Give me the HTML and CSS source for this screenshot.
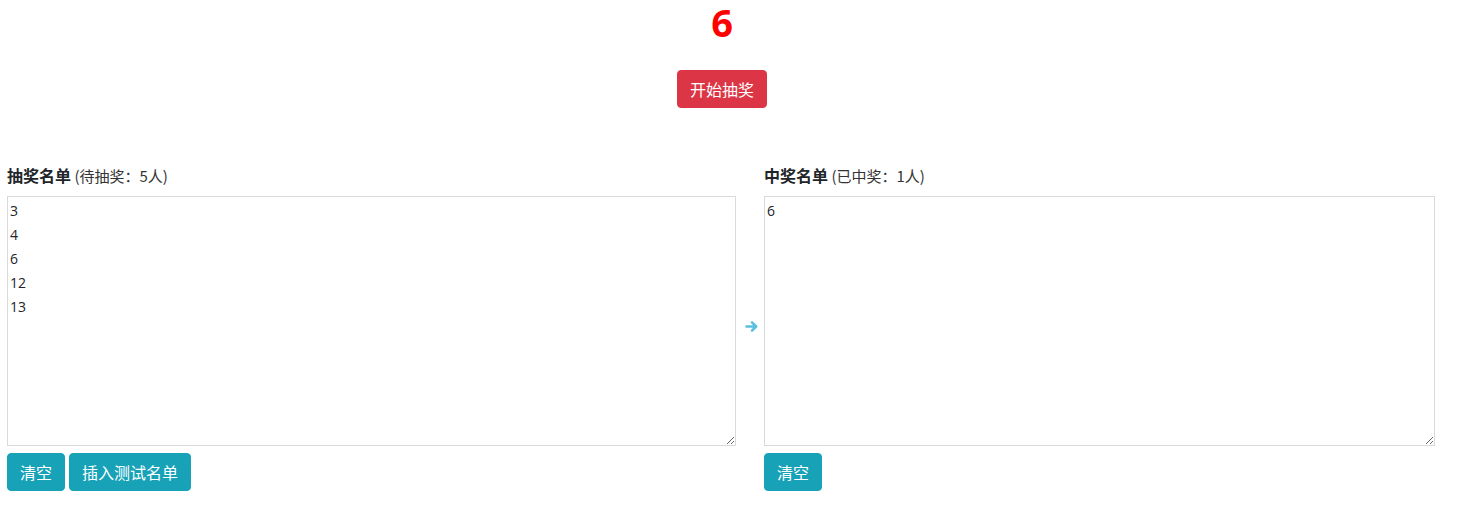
FILE: index.html
```html
<!DOCTYPE html>
<html lang="zh">
<head>
<meta charset="utf-8">
<title>抽奖</title>
<link rel="stylesheet" href="styles.css">
</head>
<body>
<div class="top">
  <div class="winner">6</div>
  <button class="btn btn-danger">开始抽奖</button>
</div>
<div class="lists">
  <div class="col col-left">
    <div class="label"><b>抽奖名单</b> (待抽奖：5人)</div>
    <textarea class="box">3
4
6
12
13</textarea>
    <div class="actions">
      <button class="btn btn-info">清空</button>
      <button class="btn btn-info">插入测试名单</button>
    </div>
  </div>
  <div class="arrow">
    <svg width="14" height="13" viewBox="0 0 14 13"><path d="M1.5 6.5h9.5M7 2.3l4.2 4.2L7 10.7" fill="none" stroke="#5bc0de" stroke-width="2.6" stroke-linecap="round" stroke-linejoin="round"/></svg>
  </div>
  <div class="col col-right">
    <div class="label"><b>中奖名单</b> (已中奖：1人)</div>
    <textarea class="box">6</textarea>
    <div class="actions">
      <button class="btn btn-info">清空</button>
    </div>
  </div>
</div>
</body>
</html>
```
FILE: styles.css
```css
html, body { margin: 0; padding: 0; background: #fff; }
body {
  font-family: "Open Sans", "Noto Sans CJK SC", sans-serif;
  color: #212529;
  font-size: 16px;
}
.top {
  display: flex;
  flex-direction: column;
  align-items: center;
  padding-right: 14px;
}
.winner {
  color: #ff0000;
  font-size: 38px;
  font-weight: 700;
  line-height: 38px;
  padding-top: 3px;
  padding-bottom: 3px;
}
.btn {
  font-family: "Noto Sans CJK SC", sans-serif;
  font-size: 16px;
  line-height: 24px;
  padding: 6px 12px;
  border: 1px solid transparent;
  border-radius: 4px;
  color: #fff;
  cursor: pointer;
  height: 38px;
}
.top .btn { margin-top: 26px; }
.btn-danger { background: #dc3545; border-color: #dc3545; }
.btn-info { background: #17a2b8; border-color: #17a2b8; }
.lists {
  display: flex;
  align-items: stretch;
  padding-left: 7px;
  margin-top: 55px;
}
.col { display: flex; flex-direction: column; }
.col-left { width: 729px; }
.col-right { width: 671px; }
.label {
  font-family: "Noto Sans CJK SC", sans-serif;
  font-size: 15px;
  line-height: 24px;
  height: 24px;
  margin-bottom: 9px;
  color: #333;
}
.label b { font-weight: 700; font-size: 16px; color: #212529; }
.box {
  box-sizing: border-box;
  width: 100%;
  height: 250px;
  border: 1px solid #d9d9d9;
  padding: 2px;
  margin: 0;
  font-family: "Open Sans", "Noto Sans CJK SC", sans-serif;
  font-size: 14px;
  line-height: 24px;
  color: #212529;
  resize: both;
}
.actions {
  display: flex;
  gap: 4px;
  margin-top: 7px;
}
.arrow {
  width: 28px;
  display: flex;
  align-items: center;
  justify-content: center;
  padding-top: 43px;
  padding-bottom: 45px;
  padding-left: 3px;
  box-sizing: border-box;
}
```
